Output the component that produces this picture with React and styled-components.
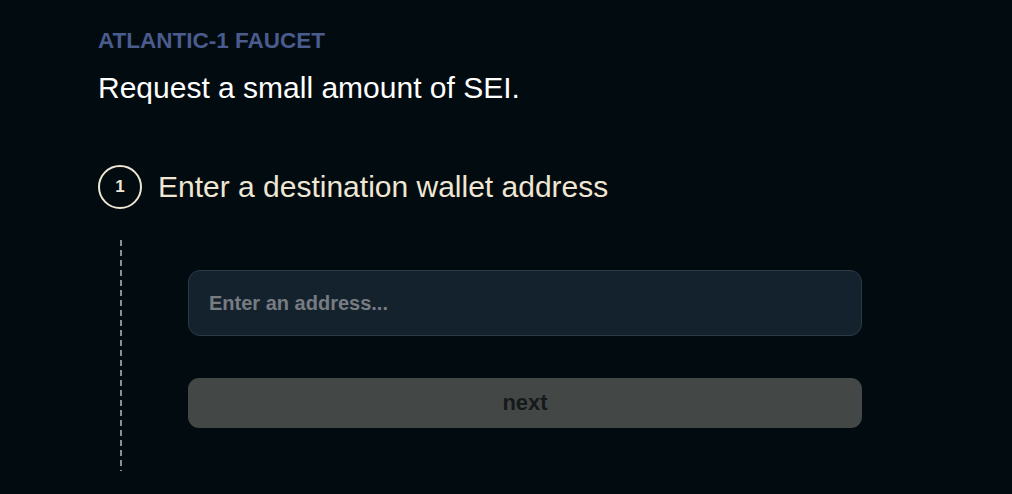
import styled, { createGlobalStyle } from "styled-components";

const GlobalStyle = createGlobalStyle`
    html, body {
        margin: 0;
        padding: 0;
        background: #020b10;
    }
    body {
        font-family: "Liberation Sans", Arial, sans-serif;
    }
`;

export default function App() {
    return (
        <>
            <GlobalStyle />
            <Page>
                <Eyebrow>ATLANTIC-1 FAUCET</Eyebrow>
                <Title>Request a small amount of SEI.</Title>

                <StepRow>
                    <StepNumber>1</StepNumber>
                    <StepLabel>Enter a destination wallet address</StepLabel>
                </StepRow>

                <StepBody>
                    <Rail />
                    <StepContent>
                        <AddressInput placeholder="Enter an address..." />
                        <NextButton disabled>next</NextButton>
                    </StepContent>
                </StepBody>
            </Page>
        </>
    );
}

const Page = styled.main`
    display: flex;
    flex-direction: column;
    align-items: flex-start;
    padding: 28px 0 0 98px;
    min-height: 494px;
    box-sizing: border-box;
`;

const Eyebrow = styled.h2`
    margin: 0;
    font-size: 22.5px;
    line-height: 26px;
    font-weight: 700;
    color: #4a5b8d;
`;

const Title = styled.h1`
    margin: 16px 0 0;
    font-size: 30px;
    line-height: 36px;
    font-weight: 400;
    color: #ffffff;
`;

const StepRow = styled.div`
    display: flex;
    align-items: center;
    gap: 16px;
    margin-top: 59px;
`;

const StepNumber = styled.span`
    display: flex;
    align-items: center;
    justify-content: center;
    width: 40px;
    height: 40px;
    border: 2px solid #efe7d4;
    border-radius: 50%;
    font-size: 17px;
    font-weight: 700;
    color: #efe7d4;
`;

const StepLabel = styled.span`
    font-size: 30px;
    line-height: 36px;
    color: #efe7d4;
`;

const StepBody = styled.div`
    display: flex;
    margin-top: 31px;
`;

const Rail = styled.div`
    width: 2px;
    margin-left: 22px;
    background: repeating-linear-gradient(
        to bottom,
        #8a9099 0 6px,
        transparent 6px 10px
    );
`;

const StepContent = styled.div`
    display: flex;
    flex-direction: column;
    gap: 42px;
    width: 674px;
    margin-left: 66px;
    padding: 30px 0 43px;
`;

const AddressInput = styled.input`
    box-sizing: border-box;
    width: 100%;
    height: 66px;
    padding: 0 20px;
    border: 1px solid #2c3a47;
    border-radius: 12px;
    background: #14222e;
    font-family: "Liberation Sans", Arial, sans-serif;
    font-size: 20px;
    font-weight: 700;
    color: #d8dde2;
    outline: none;

    &::placeholder {
        color: #777c81;
    }
`;

const NextButton = styled.button`
    width: 100%;
    height: 50px;
    border: none;
    border-radius: 11px;
    background: #434846;
    font-family: "Liberation Sans", Arial, sans-serif;
    font-size: 22px;
    font-weight: 700;
    color: #16191a;
`;
